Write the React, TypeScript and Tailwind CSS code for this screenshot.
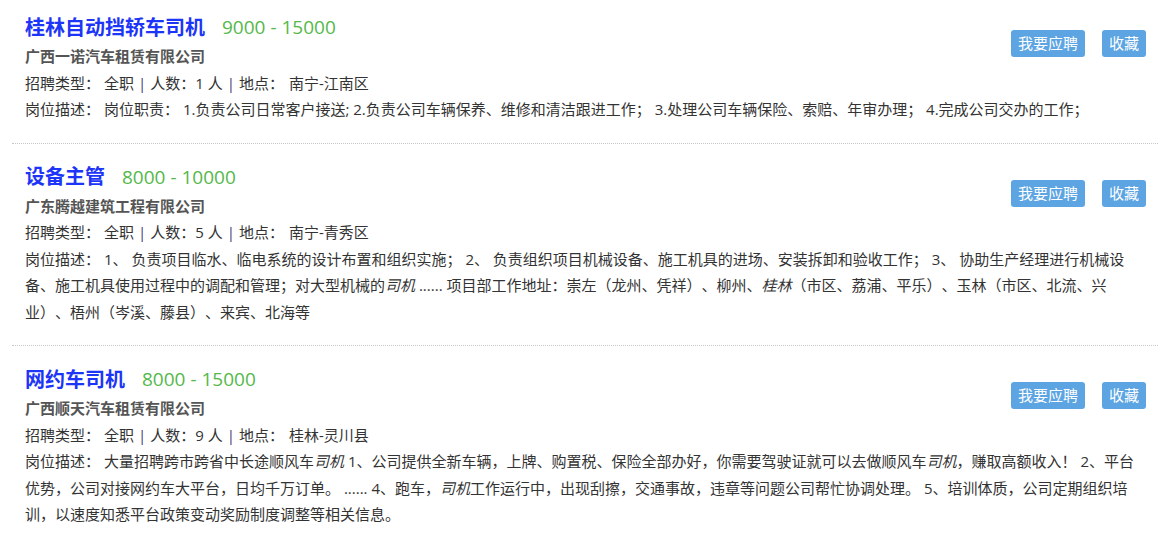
import type { ReactNode } from "react"

type Job = {
  title: string
  salary: string
  company: string
  count: number
  place: string
  desc: ReactNode
}

const Em = ({ children }: { children: ReactNode }) => <em className="italic">{children}</em>

const Pipe = () => <span className="mx-1 text-[#45367a]">|</span>

const JOBS: Job[] = [
  {
    title: "桂林自动挡轿车司机",
    salary: "9000 - 15000",
    company: "广西一诺汽车租赁有限公司",
    count: 1,
    place: "南宁-江南区",
    desc: <>岗位职责： 1.负责公司日常客户接送; 2.负责公司车辆保养、维修和清洁跟进工作； 3.处理公司车辆保险、索赔、年审办理； 4.完成公司交办的工作；</>,
  },
  {
    title: "设备主管",
    salary: "8000 - 10000",
    company: "广东腾越建筑工程有限公司",
    count: 5,
    place: "南宁-青秀区",
    desc: (
      <>
        1、 负责项目临水、临电系统的设计布置和组织实施； 2、 负责组织项目机械设备、施工机具的进场、安装拆卸和验收工作； 3、 协助生产经理进行机械设
        <br />
        备、施工机具使用过程中的调配和管理；对大型机械的<Em>司机</Em> ...... 项目部工作地址：崇左（龙州、凭祥）、柳州、<Em>桂林</Em>（市区、荔浦、平乐）、玉林（市区、北流、兴
        <br />
        业）、梧州（岑溪、藤县）、来宾、北海等
      </>
    ),
  },
  {
    title: "网约车司机",
    salary: "8000 - 15000",
    company: "广西顺天汽车租赁有限公司",
    count: 9,
    place: "桂林-灵川县",
    desc: (
      <>
        大量招聘跨市跨省中长途顺风车<Em>司机</Em> 1、公司提供全新车辆，上牌、购置税、保险全部办好，你需要驾驶证就可以去做顺风车<Em>司机</Em>，赚取高额收入！ 2、平台
        <br />
        优势，公司对接网约车大平台，日均千万订单。 ...... 4、跑车，<Em>司机</Em>工作运行中，出现刮擦，交通事故，违章等问题公司帮忙协调处理。 5、培训体质，公司定期组织培
        <br />
        训，以速度知悉平台政策变动奖励制度调整等相关信息。
      </>
    ),
  },
]

function JobItem({ job, first }: { job: Job; first: boolean }) {
  return (
    <div className={`ml-3 mr-4 border-b border-dotted border-[#c8c8c8] pl-[13px] pr-3 pb-[20px] ${first ? "pt-[12px]" : "pt-[18px]"}`}>
      {/* buttons float so the description can run under them */}
      <div className="float-right mt-[18px] flex gap-[17px]">
        <button className="h-[27px] rounded-[3px] bg-[#5ca4e2] px-[7px] text-[15px] leading-[27px] text-white">我要应聘</button>
        <button className="h-[27px] rounded-[3px] bg-[#5ca4e2] px-[7px] text-[15px] leading-[27px] text-white">收藏</button>
      </div>
      <div className="flex h-[31px] items-center">
        <span className="text-[20px] font-bold text-[#1d35f6]">{job.title}</span>
        <span className="ml-[17px] text-[19px] text-[#55b84a]">{job.salary}</span>
      </div>
      <div className="font-bold leading-[26.5px] text-[#555]">{job.company}</div>
      <div className="leading-[26.5px]">
        招聘类型：<span className="ml-1">全职</span>
        <Pipe />
        人数：{job.count} 人<Pipe />
        地点：<span className="ml-[5px]">{job.place}</span>
      </div>
      <div className="whitespace-nowrap leading-[26.5px]">
        岗位描述：<span className="ml-1">{job.desc}</span>
      </div>
    </div>
  )
}

export default function App() {
  return (
    <div className="min-h-[539px] w-[1174px] overflow-hidden bg-white text-[15px] text-[#333] [font-family:'Open_Sans','Noto_Sans_CJK_SC',sans-serif] [text-spacing-trim:space-all]">
      {JOBS.map((job, i) => (
        <JobItem key={job.title} job={job} first={i === 0} />
      ))}
    </div>
  )
}
